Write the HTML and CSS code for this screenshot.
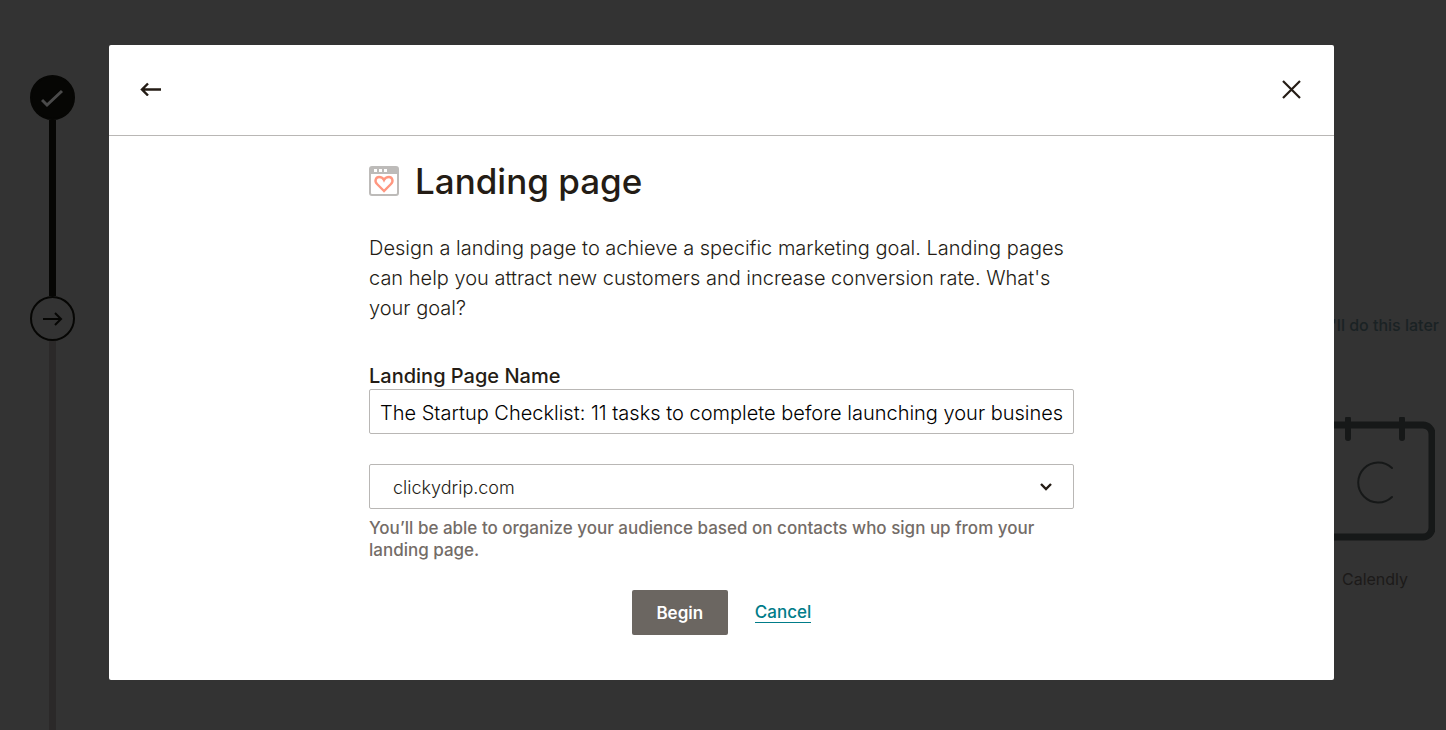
FILE: index.html
```
<!DOCTYPE html>
<html lang="en">
<head>
<meta charset="UTF-8">
<meta name="viewport" content="width=device-width, initial-scale=1.0">
<title>Landing page</title>
<link rel="stylesheet" href="styles.css">
</head>
<body>
    <div class="page">
        <!-- Progress steps -->
        <div class="steps">
            <div class="step step-done">
                <svg width="24" height="20" viewBox="0 0 24 20" fill="none" stroke="#4a4a4a" stroke-width="3"><path d="M1 12l5 5L21 3"/></svg>
            </div>
            <div class="step-line"></div>
            <div class="step">
                <svg width="22" height="14" viewBox="0 0 22 14" fill="none" stroke="#060604" stroke-width="2"><path d="M1 7h18M13 1l6 6-6 6"/></svg>
            </div>
            <div class="step-line step-line-next"></div>
        </div>

        <div class="integrations">
            <a href="#" class="later-link">I'll do this later</a>
            <div class="integration">
                <svg width="120" height="125" viewBox="0 0 120 125" fill="none" stroke="#161818" stroke-linecap="round">
                    <rect x="3" y="8" width="114" height="112" rx="9" stroke-width="7"/>
                    <path d="M33 2v19M87 2v19" stroke-width="6"/>
                    <path d="M77 51a20 20 0 1 0 0 29" stroke-width="2"/>
                </svg>
                <span>Calendly</span>
            </div>
        </div>
    </div>

    <div class="overlay">
        <div class="modal" role="dialog" aria-labelledby="modalTitle">
            <div class="modal-header">
                <button type="button" class="icon-button" aria-label="Back">
                    <svg width="22" height="14" viewBox="0 0 22 14" fill="none" stroke="#241c15" stroke-width="2.4"><path d="M21 7.500H2M8 1.500l-6 6 6 6"/></svg>
                </button>
                <button type="button" class="icon-button" aria-label="Close">
                    <svg width="20" height="20" viewBox="0 0 20 20" fill="none" stroke="#241c15" stroke-width="2.200"><path d="M1 2l17 17M18 2L1 19"/></svg>
                </button>
            </div>

            <form class="modal-body">
                <div class="title">
                    <svg width="30" height="30" viewBox="0 0 30 30">
                        <rect x="1" y="1" width="28" height="28" rx="2" fill="#fff" stroke="#bdbbb9" stroke-width="2"/>
                        <path d="M1 2h28v6H1z" fill="#bdbbb9"/>
                        <path d="M5 3h3v3H5zM10 3h3v3h-3zM15 3h3v3h-3z" fill="#fff"/>
                        <path d="M15 25l-7-7c-3-3-1-7 2-7 2 0 4 1 5 3 1-2 3-3 5-3 3 0 5 4 2 7z" fill="none" stroke="#ff9780" stroke-width="2.400"/>
                    </svg>
                    <h1 id="modalTitle">Landing page</h1>
                </div>
                <p class="intro">Design a landing page to achieve a specific marketing goal. Landing pages can help you attract new customers and increase conversion rate. What's your goal?</p>

                <label for="pageName">Landing Page Name</label>
                <input type="text" id="pageName" class="field" value="The Startup Checklist: 11 tasks to complete before launching your business">

                <div class="select-wrap">
                    <select id="audience" class="field" aria-label="Audience" aria-describedby="audienceHelp">
                        <option>clickydrip.com</option>
                    </select>
                    <svg class="chevron" width="12" height="8" viewBox="0 0 12 8" fill="none" stroke="#241c15" stroke-width="2.400"><path d="M1 1l5 5 5-5"/></svg>
                </div>
                <p class="help" id="audienceHelp">You’ll be able to organize your audience based on contacts who sign up from your landing page.</p>

                <div class="actions">
                    <button type="submit" class="begin">Begin</button>
                    <a href="#" class="cancel">Cancel</a>
                </div>
            </form>
        </div>
    </div>
</body>
</html>
```

FILE: styles.css
```
* {
box-sizing: border-box;
}

body {
margin: 0;
font-family: Inter, "Liberation Sans", sans-serif;
color: #241c15;
background-color: #333333;
}

.page {
display: flex;
justify-content: space-between;
height: 100vh;
overflow: hidden;
}

.steps {
display: flex;
flex-direction: column;
align-items: center;
padding: 75px 30px 0;
}

.step {
display: flex;
justify-content: center;
align-items: center;
flex-shrink: 0;
width: 45px;
height: 45px;
border: 2px solid #060604;
border-radius: 50%;
}

.step-done {
background-color: #060604;
}

.step-line {
flex-shrink: 0;
width: 7px;
height: 176px;
background-color: #060604;
}

.step-line-next {
flex: 1;
background-color: #2b2929;
}

.integrations {
display: flex;
flex-direction: column;
align-items: flex-end;
padding: 315px 7px 0 0;
font-size: 16px;
line-height: 20px;
}

.later-link {
font-weight: 500;
color: #1a2224;
text-decoration: none;
}

.integration {
display: flex;
flex-direction: column;
align-items: center;
gap: 27px;
padding: 82px 4px 0 0;
color: #1c1a19;
}

/* Dialog over the page */
.overlay {
position: fixed;
inset: 0;
padding: 45px 112px 50px 109px;
overflow: auto;
}

.modal {
min-height: 100%;
background-color: #ffffff;
border-radius: 2px;
}

.modal-header {
display: flex;
justify-content: space-between;
align-items: center;
height: 91px;
padding: 0 32px 2px 31px;
border-bottom: 1px solid #b9b7b5;
}

.icon-button {
display: flex;
padding: 0;
border: none;
background: none;
cursor: pointer;
}

.modal-body {
max-width: 705px;
margin: 0 auto;
padding-top: 23px;
}

.title {
display: flex;
align-items: center;
gap: 16px;
}

h1 {
margin: 0;
font-size: 35px;
font-weight: 500;
line-height: 44px;
}

.intro {
margin: 30px 0 40px;
font-size: 20px;
font-weight: 300;
line-height: 30px;
}

label {
display: block;
font-size: 20px;
font-weight: 500;
line-height: 26px;
}

.field {
display: block;
width: 100%;
height: 45px;
padding: 2px 10px 0;
border: 1px solid #b9b7b5;
border-radius: 2px;
background-color: #ffffff;
font-family: inherit;
font-size: 20px;
font-weight: 300;
color: #000000;
}

.select-wrap {
position: relative;
margin-top: 30px;
}

select.field {
appearance: none;
padding: 2px 23px 0;
font-size: 18px;
color: #241c15;
}

.chevron {
position: absolute;
top: 19px;
right: 22px;
pointer-events: none;
}

.help {
margin: 8px 0 0;
font-size: 17px;
font-weight: 500;
line-height: 22px;
color: #736c67;
}

.actions {
display: flex;
justify-content: center;
align-items: center;
gap: 27px;
margin-top: 29px;
}

.begin {
width: 96px;
height: 45px;
border: none;
border-radius: 2px;
background-color: #6b6661;
font-family: inherit;
font-size: 17px;
font-weight: 600;
color: #ffffff;
cursor: pointer;
}

.cancel {
border-bottom: 1px solid #007c89;
font-size: 17px;
font-weight: 500;
line-height: 20px;
color: #007c89;
text-decoration: none;
}
```
